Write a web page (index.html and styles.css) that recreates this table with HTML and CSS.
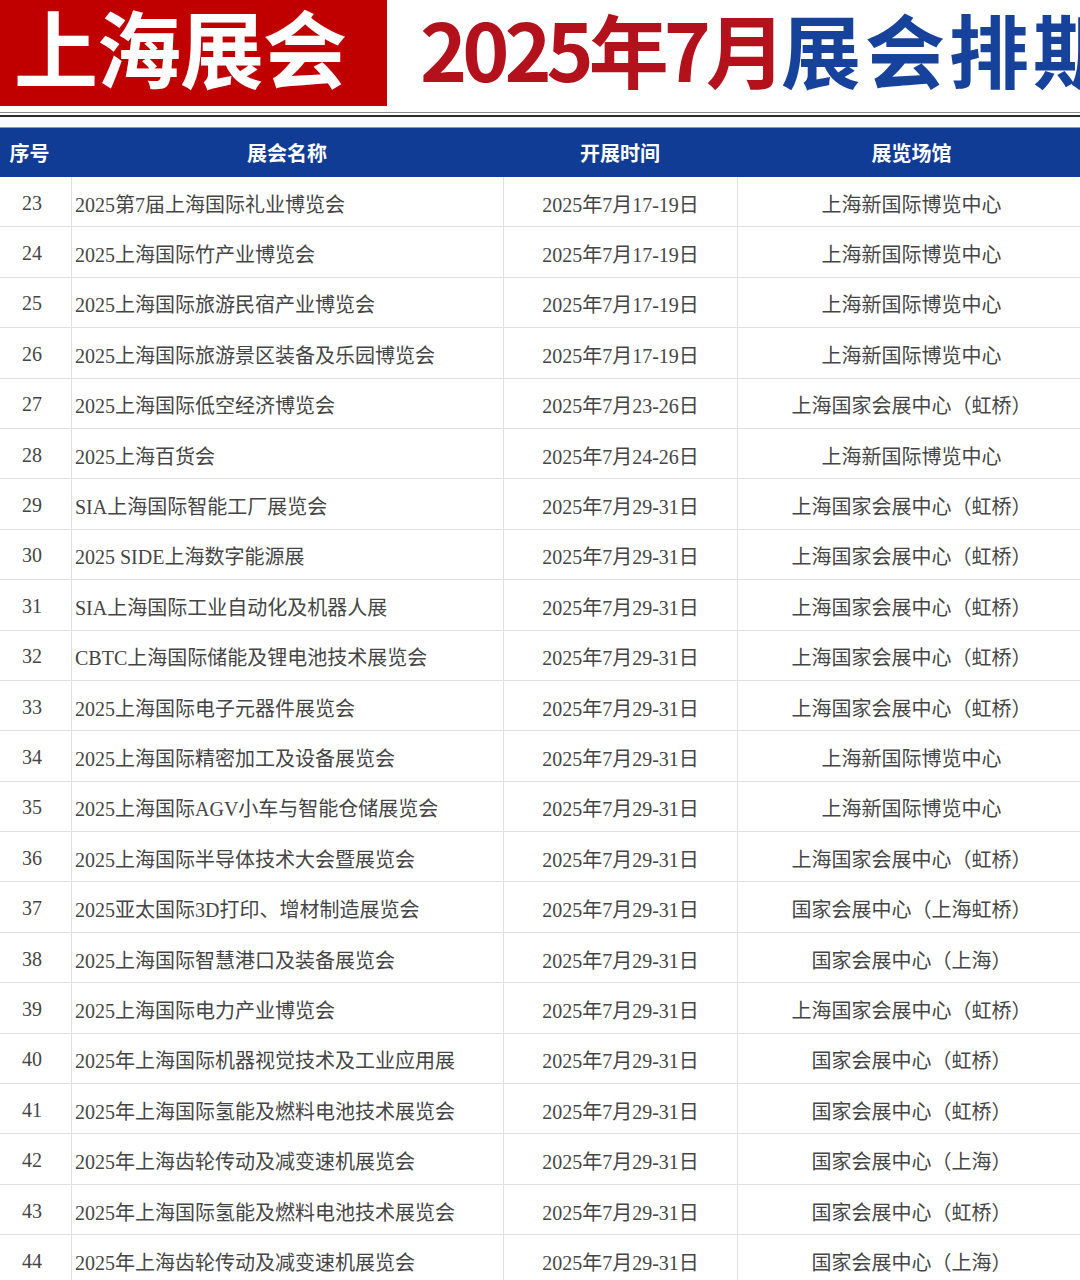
FILE: index.html
```html
<!DOCTYPE html>
<html lang="zh-CN">
<head>
<meta charset="utf-8">
<title>上海展会 2025年7月展会排期</title>
<link rel="stylesheet" href="styles.css">
</head>
<body>
<div class="page">
  <header class="title">
    <div class="brand">上海展会</div>
    <div class="headline"><span class="red">2025年7月</span><span class="blue">展会排期</span></div>
  </header>
  <div class="rule"></div>
  <div class="table">
    <div class="row head">
      <div class="c1">序号</div><div class="c2">展会名称</div><div class="c3">开展时间</div><div class="c4">展览场馆</div>
    </div>
    <div class="row"><div class="c1">23</div><div class="c2">2025第7届上海国际礼业博览会</div><div class="c3">2025年7月17-19日</div><div class="c4">上海新国际博览中心</div></div>
    <div class="row"><div class="c1">24</div><div class="c2">2025上海国际竹产业博览会</div><div class="c3">2025年7月17-19日</div><div class="c4">上海新国际博览中心</div></div>
    <div class="row"><div class="c1">25</div><div class="c2">2025上海国际旅游民宿产业博览会</div><div class="c3">2025年7月17-19日</div><div class="c4">上海新国际博览中心</div></div>
    <div class="row"><div class="c1">26</div><div class="c2">2025上海国际旅游景区装备及乐园博览会</div><div class="c3">2025年7月17-19日</div><div class="c4">上海新国际博览中心</div></div>
    <div class="row"><div class="c1">27</div><div class="c2">2025上海国际低空经济博览会</div><div class="c3">2025年7月23-26日</div><div class="c4">上海国家会展中心（虹桥）</div></div>
    <div class="row"><div class="c1">28</div><div class="c2">2025上海百货会</div><div class="c3">2025年7月24-26日</div><div class="c4">上海新国际博览中心</div></div>
    <div class="row"><div class="c1">29</div><div class="c2">SIA上海国际智能工厂展览会</div><div class="c3">2025年7月29-31日</div><div class="c4">上海国家会展中心（虹桥）</div></div>
    <div class="row"><div class="c1">30</div><div class="c2">2025 SIDE上海数字能源展</div><div class="c3">2025年7月29-31日</div><div class="c4">上海国家会展中心（虹桥）</div></div>
    <div class="row"><div class="c1">31</div><div class="c2">SIA上海国际工业自动化及机器人展</div><div class="c3">2025年7月29-31日</div><div class="c4">上海国家会展中心（虹桥）</div></div>
    <div class="row"><div class="c1">32</div><div class="c2">CBTC上海国际储能及锂电池技术展览会</div><div class="c3">2025年7月29-31日</div><div class="c4">上海国家会展中心（虹桥）</div></div>
    <div class="row"><div class="c1">33</div><div class="c2">2025上海国际电子元器件展览会</div><div class="c3">2025年7月29-31日</div><div class="c4">上海国家会展中心（虹桥）</div></div>
    <div class="row"><div class="c1">34</div><div class="c2">2025上海国际精密加工及设备展览会</div><div class="c3">2025年7月29-31日</div><div class="c4">上海新国际博览中心</div></div>
    <div class="row"><div class="c1">35</div><div class="c2">2025上海国际AGV小车与智能仓储展览会</div><div class="c3">2025年7月29-31日</div><div class="c4">上海新国际博览中心</div></div>
    <div class="row"><div class="c1">36</div><div class="c2">2025上海国际半导体技术大会暨展览会</div><div class="c3">2025年7月29-31日</div><div class="c4">上海国家会展中心（虹桥）</div></div>
    <div class="row"><div class="c1">37</div><div class="c2">2025亚太国际3D打印、增材制造展览会</div><div class="c3">2025年7月29-31日</div><div class="c4">国家会展中心（上海虹桥）</div></div>
    <div class="row"><div class="c1">38</div><div class="c2">2025上海国际智慧港口及装备展览会</div><div class="c3">2025年7月29-31日</div><div class="c4">国家会展中心（上海）</div></div>
    <div class="row"><div class="c1">39</div><div class="c2">2025上海国际电力产业博览会</div><div class="c3">2025年7月29-31日</div><div class="c4">上海国家会展中心（虹桥）</div></div>
    <div class="row"><div class="c1">40</div><div class="c2">2025年上海国际机器视觉技术及工业应用展</div><div class="c3">2025年7月29-31日</div><div class="c4">国家会展中心（虹桥）</div></div>
    <div class="row"><div class="c1">41</div><div class="c2">2025年上海国际氢能及燃料电池技术展览会</div><div class="c3">2025年7月29-31日</div><div class="c4">国家会展中心（虹桥）</div></div>
    <div class="row"><div class="c1">42</div><div class="c2">2025年上海齿轮传动及减变速机展览会</div><div class="c3">2025年7月29-31日</div><div class="c4">国家会展中心（上海）</div></div>
    <div class="row"><div class="c1">43</div><div class="c2">2025年上海国际氢能及燃料电池技术展览会</div><div class="c3">2025年7月29-31日</div><div class="c4">国家会展中心（虹桥）</div></div>
    <div class="row"><div class="c1">44</div><div class="c2">2025年上海齿轮传动及减变速机展览会</div><div class="c3">2025年7月29-31日</div><div class="c4">国家会展中心（上海）</div></div>
  </div>
</div>
</body>
</html>
```
FILE: styles.css
```css
html, body {
  margin: 0;
  padding: 0;
  background: #ffffff;
}
body {
  width: 1080px;
  height: 1280px;
  overflow: hidden;
  font-family: "Liberation Serif", "Noto Sans CJK SC", serif;
}
.page {
  width: 1080px;
}
.title {
  display: flex;
  align-items: flex-start;
  height: 106px;
  white-space: nowrap;
  font-family: "Noto Sans CJK SC", sans-serif;
  font-weight: 700;
}
.brand {
  flex: none;
  width: 387px;
  height: 106px;
  box-sizing: border-box;
  padding-left: 14px;
  background: #c00000;
  color: #ffffff;
  font-size: 84px;
  line-height: 92px;
  letter-spacing: -1px;
}
.headline {
  flex: none;
  margin-left: 33px;
  font-size: 80px;
  line-height: 94px;
}
.headline .red {
  color: #b3121c;
  letter-spacing: -5px;
}
.headline .blue {
  color: #17429c;
  margin-left: 0;
  letter-spacing: 4px;
}
.rule {
  margin-top: 6px;
  height: 2px;
  border-top: 1px solid #8a8a8a;
  border-bottom: 2px solid #2e2e2e;
}
.table {
  margin-top: 10px;
  width: 1080px;
}
.row {
  display: grid;
  grid-template-columns: 71px 432px 234px 343px;
  height: 50.4px;
  box-sizing: border-box;
  border-bottom: 1px solid #e0e0e0;
  font-size: 20px;
  color: #454545;
}
.row > div {
  display: flex;
  align-items: center;
  justify-content: center;
  white-space: nowrap;
  overflow: hidden;
  padding-top: 3px;
  box-sizing: border-box;
}
.row > div + div {
  border-left: 1px solid #e0e0e0;
}
.row .c1 {
  padding-right: 7px;
}
.row .c2 {
  justify-content: flex-start;
  padding-left: 3px;
}
.row .c4 {
  padding-left: 5px;
}
.row.head {
  height: 50px;
  background: #113c96;
  border-top: 1px solid #7d9ad6;
  border-bottom: none;
  color: #ffffff;
  font-weight: 700;
}
.row.head > div {
  padding-top: 0;
}
.row.head > div + div {
  border-left: none;
}
.row.head .c1 {
  padding-right: 12px;
}
.row.head .c2 {
  justify-content: center;
  padding-left: 0;
}
.row.head .c4 {
  padding-left: 6px;
}
```
